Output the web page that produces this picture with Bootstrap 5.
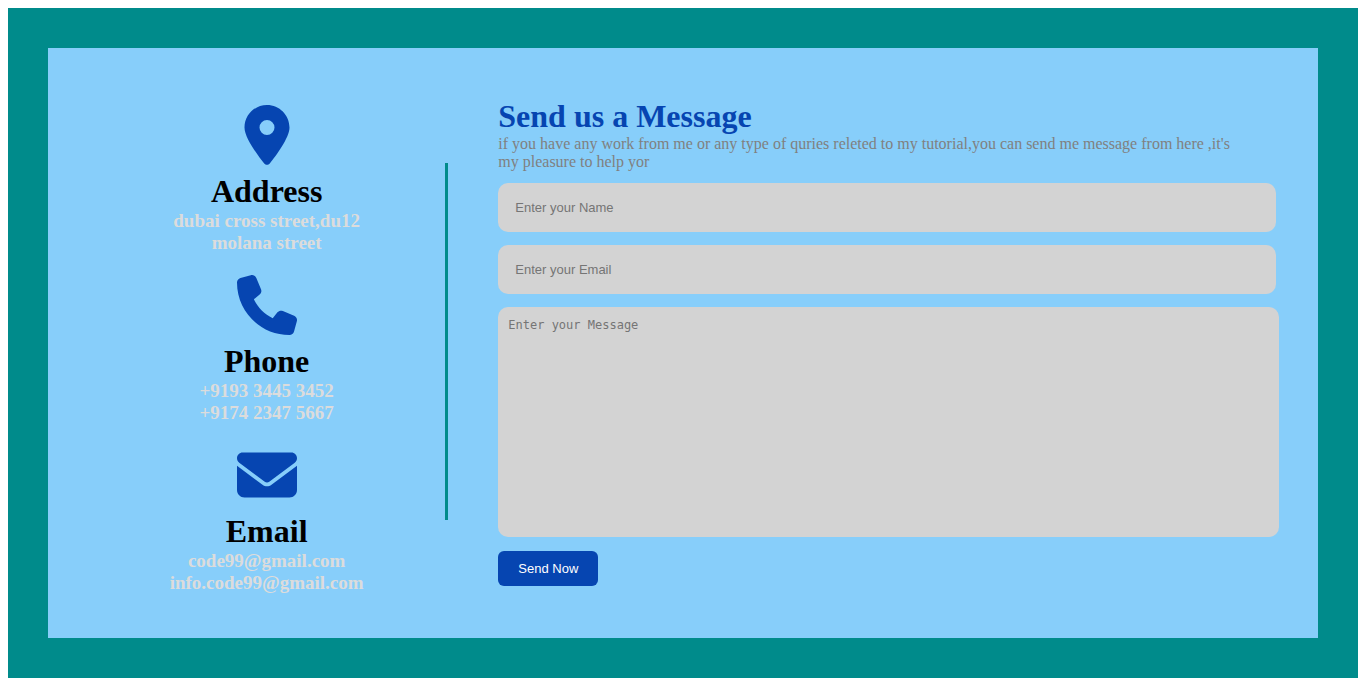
<!DOCTYPE html>
<html lang="en">
<head>
<meta charset="utf-8">
<meta name="viewport" content="width=device-width, initial-scale=1">
<title>Contact</title>
<link href="https://cdn.jsdelivr.net/npm/bootstrap@5.3.0/dist/css/bootstrap.min.css" rel="stylesheet">
<style>
  :root { --brand: #0645b1; --frame: #008b8b; --panel: #87cefa; --field: #d3d3d3; }
  body { font-family: "Liberation Serif", "Times New Roman", serif; padding: 8px; background: #fff; }
  .frame { background: var(--frame); padding: 40px; min-height: calc(100vh - 16px); }
  .panel { background: var(--panel); padding: 51px 39px 40px 40px; }
  .contacts { flex: 0 0 30%; padding-top: 6px; gap: 21px; }
  .contact-icon { width: 60px; height: 60px; fill: var(--brand); margin-bottom: 9px; }
  .title { font-size: 32px; line-height: 34px; font-weight: 700; margin: 0 0 2px; }
  .contact-title { color: #000; }
  .detail { font-size: 19px; line-height: 22px; font-weight: 700; color: #dcdcdc; margin: 0; }
  .divider { width: 3px; height: 357px; margin-top: 64px; background: var(--frame); }
  .message { margin-left: 50px; min-width: 0; }
  .message-title { color: var(--brand); }
  .intro { font-size: 16px; line-height: 18px; color: #808080; margin: 0 0 12px; padding-right: 40px; }
  .field, .field:focus { background: var(--field); border: 0; border-radius: 10px; }
  .field::placeholder { color: #757575; }
  .short-fields { margin-right: 3px; }
  .field-line { height: 49px; padding: 0 17px; margin-bottom: 13px; font: 13px "Liberation Sans", Arial, sans-serif; }
  .field-area { height: 230px; padding: 10px; margin-bottom: 14px; resize: none; font: 12px/16px "DejaVu Sans Mono", monospace; }
  .send { width: 100px; height: 35px; padding: 0; border: 0; border-radius: 6px; color: #fff; background: var(--brand); font: 13px "Liberation Sans", Arial, sans-serif; }
  .send:hover { color: #fff; background: #05388f; }
</style>
</head>
<body>
<main class="frame d-flex flex-column">
  <div class="panel d-flex flex-grow-1">
    <section class="contacts d-flex flex-column text-center">
      <div>
        <svg class="contact-icon d-block mx-auto" viewBox="-64 0 512 512" aria-hidden="true"><path d="M215.700 499.200C267 435 384 279.400 384 192C384 86 298 0 192 0S0 86 0 192c0 87.400 117 243 168.300 307.200c12.300 15.300 35.100 15.300 47.400 0zM192 128a64 64 0 1 1 0 128 64 64 0 1 1 0-128z"/></svg>
        <h1 class="title contact-title">Address</h1>
        <p class="detail">dubai cross street,du12<br>molana street</p>
      </div>
      <div>
        <svg class="contact-icon d-block mx-auto" viewBox="0 0 512 512" aria-hidden="true"><path d="M164.900 24.600c-7.700-18.600-28-28.500-47.400-23.200l-88 24C12.100 30.200 0 46 0 64C0 311.400 200.600 512 448 512c18 0 33.800-12.100 38.600-29.500l24-88c5.300-19.400-4.600-39.700-23.200-47.400l-96-40c-16.300-6.800-35.200-2.100-46.300 11.600L304.700 368C234.300 334.700 177.300 277.700 144 207.300L193.300 167c13.700-11.200 18.400-30 11.600-46.300l-40-96z"/></svg>
        <h1 class="title contact-title">Phone</h1>
        <p class="detail">+9193 3445 3452<br>+9174 2347 5667</p>
      </div>
      <div>
        <svg class="contact-icon d-block mx-auto" viewBox="0 0 512 512" aria-hidden="true"><path d="M48 64C21.500 64 0 85.500 0 112c0 15.100 7.100 29.300 19.200 38.400L236.800 313.600c11.400 8.500 27 8.500 38.400 0L492.800 150.400c12.100-9.100 19.200-23.300 19.200-38.400c0-26.500-21.500-48-48-48H48zM0 176V384c0 35.300 28.700 64 64 64H448c35.300 0 64-28.700 64-64V176L294.400 339.200c-22.800 17.100-54 17.100-76.800 0L0 176z"/></svg>
        <h1 class="title contact-title">Email</h1>
        <p class="detail">code99@gmail.com<br>info.code99@gmail.com</p>
      </div>
    </section>
    <div class="divider flex-shrink-0"></div>
    <section class="message flex-grow-1">
      <h1 class="title message-title">Send us a Message</h1>
      <p class="intro">if you have any work from me or any type of quries releted to my tutorial,you can send me message from here ,it's my pleasure to help yor</p>
      <form>
        <div class="short-fields">
          <input type="text" class="form-control field field-line" placeholder="Enter your Name" aria-label="Enter your Name">
          <input type="email" class="form-control field field-line" placeholder="Enter your Email" aria-label="Enter your Email">
        </div>
        <textarea class="form-control field field-area" placeholder="Enter your Message" aria-label="Enter your Message"></textarea>
        <button type="button" class="btn send">Send Now</button>
      </form>
    </section>
  </div>
</main>
<script src="https://cdn.jsdelivr.net/npm/bootstrap@5.3.0/dist/js/bootstrap.bundle.min.js"></script>
</body>
</html>
